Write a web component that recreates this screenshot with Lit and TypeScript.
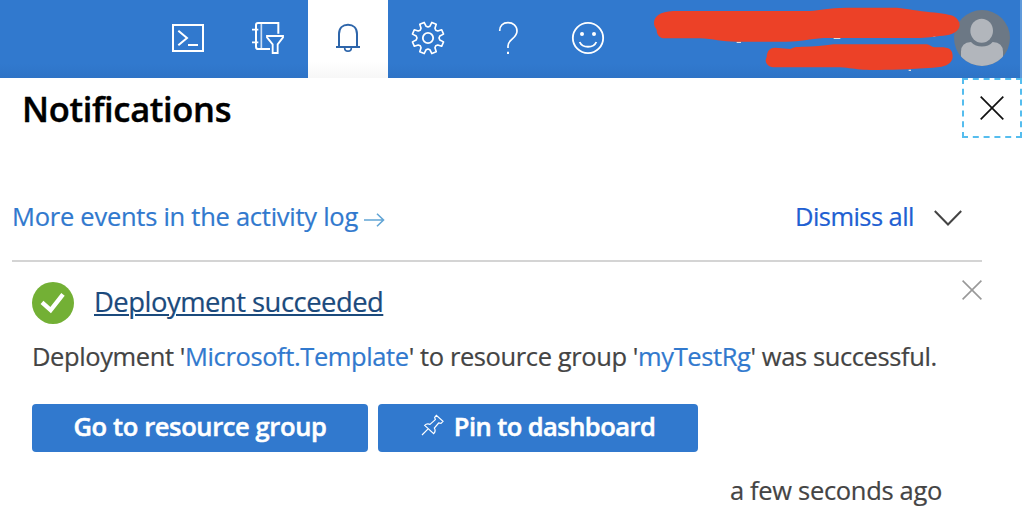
import { LitElement, html, css, svg } from "lit";
import { customElement } from "lit/decorators.js";

// Outline of the eight-toothed settings gear, centred on (cx, cy).
function gearPath(cx: number, cy: number, outer: number, inner: number): string {
  const points: string[] = [];
  const add = (radius: number, degrees: number) => {
    const a = (degrees * Math.PI) / 180;
    points.push(`${(cx + radius * Math.cos(a)).toFixed(1)} ${(cy + radius * Math.sin(a)).toFixed(1)}`);
  };
  for (let i = 0; i < 8; i++) {
    const mid = i * 45 + 22.5;
    add(inner, mid - 13);
    add(outer, mid - 8.5);
    add(outer, mid + 8.5);
    add(inner, mid + 13);
    add(inner - 3, mid + 22.5);
  }
  return `M${points.join("L")}Z`;
}

const toolbar = [
  {
    name: "Cloud Shell",
    active: false,
    art: svg`<rect x="75" y="75" width="90" height="78" stroke-width="6"/>
      <path d="M91 92L117 114L91 136M120 135H150" stroke-width="6"/>`,
  },
  {
    name: "Directories and subscriptions",
    active: false,
    art: svg`<path d="M151 101V69H90Q84 69 84 75V140Q84 147 91 147H126" stroke-width="6"/>
      <path d="M100 69V147" stroke-width="5" opacity=".75"/>
      <path d="M72 89H91M72 127H91" stroke-width="5"/>
      <path d="M117 108H165V112L149 133V159H134V133L117 112Z" stroke-width="5.5"/>`,
  },
  {
    name: "Notifications",
    active: true,
    art: svg`<path d="M93 139V102C93 84 104 74 120 74S147 84 147 102V139" stroke-width="6"/>
      <path d="M84 141H156" stroke-width="6"/>
      <path d="M110 143C110 157 130 157 130 143" stroke-width="5"/>`,
  },
  {
    name: "Settings",
    active: false,
    art: svg`<path d="${gearPath(120, 114, 48, 36)}" stroke-width="5" stroke-linejoin="round"/>
      <circle cx="120" cy="114" r="15.5" stroke-width="5.5"/>`,
  },
  {
    name: "Help",
    active: false,
    art: svg`<path d="M95 93C95 77 105 68 120 68S147 77 147 93C147 116 120 117 120 138V144" stroke-width="5"/>
      <path d="M120 155V162" stroke-width="6"/>`,
  },
  {
    name: "Feedback",
    active: false,
    art: svg`<circle cx="120" cy="114" r="45.5" stroke-width="5.5"/>
      <circle cx="102" cy="102" r="6" fill="currentColor" stroke="none"/>
      <circle cx="138" cy="102" r="6" fill="currentColor" stroke="none"/>
      <path d="M95 126C103 145 137 145 145 126" stroke-width="5.5"/>`,
  },
];

@customElement("portal-header")
class PortalHeader extends LitElement {
  static styles = css`
    :host { display: flex; height: 78px; background: linear-gradient(#3179ce 0 64px, #2e73c6); padding-left: 148px; box-sizing: border-box; }
    .tool { width: 80px; height: 78px; color: #fff; flex: none; }
    .tool.active { background: linear-gradient(#fff 0 62px, #f7f7f7); color: #2d65aa; }
    svg { display: block; width: 100%; height: 100%; }
    .account { width: 394px; height: 78px; flex: none; }
  `;
  render() {
    return html`
      ${toolbar.map(
        (t) => html`<div class="tool ${t.active ? "active" : ""}">
          <svg viewBox="0 0 240 234" fill="none" stroke="currentColor" aria-label=${t.name}>${t.art}</svg>
        </div>`
      )}
      <div class="account">
        <svg viewBox="-36 0 1182 234">
          <defs><clipPath id="face"><circle cx="1026" cy="114" r="84"/></clipPath></defs>
          <circle cx="1026" cy="114" r="84" fill="#6c7885"/>
          <g clip-path="url(#face)" fill="#b2b6bc">
            <path d="M963 200V155Q963 128 993 126C1008 144 1044 144 1058 126Q1089 128 1089 155V200Z"/>
            <ellipse cx="1025" cy="92" rx="34" ry="36"/>
          </g>
          <path d="M290 127H303M581 115H601M806 211H813M878 108H886" stroke="#e4ddd9" stroke-width="4"/>
          <path fill="#ec4127" d="M42 70C42 48 60 35 100 33H510C540 31 565 24 620 23H760C790 23 820 31 860 35C890 38 925 42 940 48C953 55 959 65 959 76C957 92 942 103 920 106C890 109 870 113 840 114H550C510 117 480 125 440 125H290C245 125 220 117 180 115H70C57 113 50 103 50 90C47 83 42 80 42 70Z"/>
          <path fill="#ec4127" d="M380 170C382 151 390 143 405 143L452 147C462 139 475 141 490 140C520 140 550 137 580 133H860C870 133 874 142 884 142C905 141 922 141 930 148C937 154 938 162 938 172C936 188 923 197 905 200C870 205 835 204 800 208C750 210 700 210 670 209C645 208 630 204 600 202H400C385 201 377 190 377 180Z"/>
          <rect x="1140" y="0" width="6" height="234" fill="#5f9adb"/>
        </svg>
      </div>`;
  }
}

@customElement("notification-card")
class NotificationCard extends LitElement {
  static styles = css`
    :host { display: block; margin: 0 40px 0 12px; border-top: 2px solid #d4d4d4; padding: 20px 0 0 20px; color: #444; }
    .head { display: flex; height: 42px; }
    .check { width: 42px; height: 42px; flex: none; }
    .title { margin-left: 20px; font-size: 27.4px; line-height: 40px; letter-spacing: -0.5px; color: #1b4a7c; text-decoration: underline; text-decoration-thickness: 2px; text-underline-offset: 2px; white-space: nowrap; -webkit-text-stroke: 0.2px; }
    .dismiss { width: 20px; height: 20px; margin: -2px 0 0 auto; flex: none; }
    .message { margin-top: 12px; font-size: 25.5px; line-height: 40px; white-space: nowrap; letter-spacing: -0.4px; -webkit-text-stroke: 0.2px; }
    .link { color: #3179ce; }
    .actions { display: flex; gap: 10px; margin-top: 28px; }
    .button { display: flex; align-items: center; justify-content: center; box-sizing: border-box; height: 48px; border-radius: 4px; background: #3179ce; color: #fff; font: 600 25.5px/44px "Open Sans", sans-serif; padding-bottom: 4px; white-space: nowrap; -webkit-text-stroke: 0.5px; }
    .go { width: 336px; letter-spacing: -0.38px; }
    .pin { width: 320px; letter-spacing: -0.55px; }
    .pin svg { width: 24px; height: 24px; margin-right: 9px; }
    .time { margin: 18px 40px 0 0; text-align: right; font-size: 25.5px; line-height: 40px; letter-spacing: -0.32px; -webkit-text-stroke: 0.2px; }
  `;
  render() {
    return html`
      <div class="head">
        <svg class="check" viewBox="0 0 126 126">
          <circle cx="63" cy="63" r="63" fill="#73b035"/>
          <path d="M30 61L56 84L93 37" fill="none" stroke="#fff" stroke-width="13"/>
        </svg>
        <span class="title">Deployment succeeded</span>
        <svg class="dismiss" viewBox="0 0 20 20"><path d="M.6 .6L19.4 19.4M19.4 .6L.6 19.4" stroke="#999" stroke-width="1.6"/></svg>
      </div>
      <div class="message">Deployment '<span class="link">Microsoft.Template</span>' to resource group '<span class="link">myTestRg</span>' was successful.</div>
      <div class="actions">
        <div class="button go">Go to resource group</div>
        <div class="button pin">
          <svg viewBox="0 0 72 72" fill="none" stroke="#fff" stroke-width="3.6"><path d="M3 63L22 44M11 34L38 59C43 54 43 47 40 42L53 27L60 28L66 22L46 4L41 10L43 17L27 31C21 29 15 30 11 34Z"/></svg>
          <span>Pin to dashboard</span>
        </div>
      </div>
      <div class="time">a few seconds ago</div>`;
  }
}

@customElement("app-root")
class AppRoot extends LitElement {
  static styles = css`
    :host { display: block; width: 1022px; height: 524px; overflow: hidden; background: #fff; font-family: "Open Sans", "Noto Sans", sans-serif; }
    .top { display: flex; justify-content: space-between; height: 60px; padding-left: 22px; }
    .heading { margin: 0; font-size: 34.5px; line-height: 62px; font-weight: 600; color: #000; letter-spacing: -0.35px; -webkit-text-stroke: 0.4px; }
    .close { width: 60px; height: 60px; box-sizing: border-box; border: 2px dashed #55bdee; display: flex; align-items: center; justify-content: center; }
    .close svg { width: 24px; height: 24px; }
    .bar { display: flex; align-items: center; height: 40px; margin: 58px 60px 0 12px; padding-bottom: 24px; font-size: 25.5px; line-height: 40px; letter-spacing: -0.26px; white-space: nowrap; -webkit-text-stroke: 0.2px; }
    .more { color: #3179ce; }
    .arrow { width: 21px; height: 14px; margin: 7px 0 0 6px; }
    .all { margin-left: auto; color: #215fd2; letter-spacing: -0.55px; }
    .chevron { width: 28px; height: 16px; margin: 3px 0 0 20px; }
  `;
  render() {
    return html`
      <portal-header></portal-header>
      <div class="top">
        <h1 class="heading">Notifications</h1>
        <div class="close"><svg viewBox="0 0 24 24"><path d="M.7 .7L23.3 23.3M23.3 .7L.7 23.3" stroke="#111" stroke-width="1.7"/></svg></div>
      </div>
      <div class="bar">
        <span class="more">More events in the activity log</span>
        <svg class="arrow" viewBox="0 0 21 14" fill="none" stroke="#62a5d5" stroke-width="1.6"><path d="M0 7H19.5M13 .7L19.5 7L13 13.3"/></svg>
        <span class="all">Dismiss all</span>
        <svg class="chevron" viewBox="0 0 28 16" fill="none" stroke="#444" stroke-width="2"><path d="M.8 1L14 14.5L27.2 1"/></svg>
      </div>
      <notification-card></notification-card>`;
  }
}
